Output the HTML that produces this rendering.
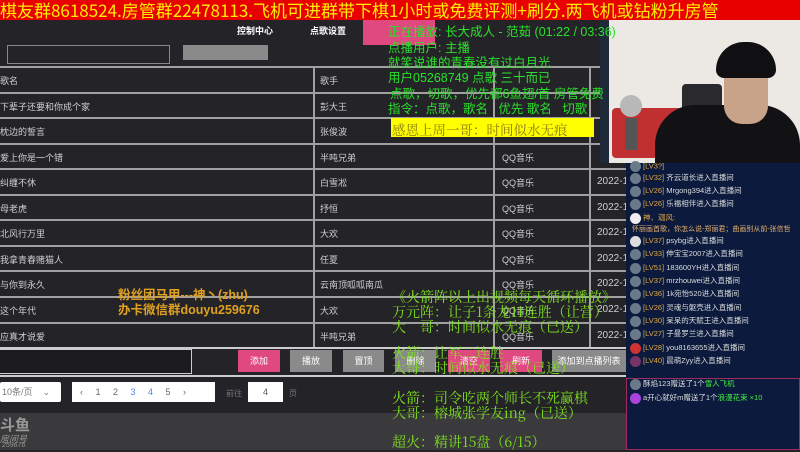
<!DOCTYPE html><html><head><meta charset="utf-8"><style>
*{margin:0;padding:0;box-sizing:border-box}
body{width:800px;height:450px;overflow:hidden;background:#242428;font-family:"Liberation Sans","Noto Sans CJK SC",sans-serif;position:relative;color:#ccc}
.a{position:absolute;white-space:nowrap}
.hl{position:absolute;left:0;width:626px;height:2px;background:#a0a0a0}
.vl{position:absolute;width:2px;background:#a0a0a0}
.c{position:absolute;font-size:9px;color:#d0d0d0;white-space:nowrap}
.g{position:absolute;color:#2be02b;font-size:12.5px;white-space:nowrap}
.gb{position:absolute;color:#7ee01e;font-size:14px;font-family:"Noto Serif CJK SC",serif;white-space:nowrap;left:392px}
.btn{position:absolute;top:350px;height:22px;font-size:9px;color:#fff;text-align:center;line-height:22px}
.ch{position:absolute;left:630px;font-size:7.5px;color:#ddd;white-space:nowrap}
.ch b{color:#e6a840;font-weight:normal}
.av{display:inline-block;width:11px;height:11px;border-radius:50%;background:#6a7a8a;vertical-align:middle;margin-right:2px}
</style></head><body>
<div class="a" style="left:0;top:0;width:800px;height:20px;background:#e80000"></div>
<div class="a" style="left:0;top:0;font-size:17px;line-height:20px;color:#ffee00;font-family:'Noto Sans CJK SC',sans-serif">棋友群8618524.房管群22478113.飞机可进群带下棋1小时或免费评测+刷分.两飞机或钻粉升房管</div>

<div class="a" style="left:237px;top:24px;font-size:9px;color:#fff;font-weight:bold">控制中心</div>
<div class="a" style="left:310px;top:24px;font-size:9px;color:#fff;font-weight:bold">点歌设置</div>
<div class="a" style="left:363px;top:20px;width:72px;height:25px;background:#e04880"></div>
<div class="a" style="left:7px;top:45px;width:163px;height:19px;border:1px solid #888"></div>
<div class="a" style="left:183px;top:45px;width:85px;height:15px;background:#8a8a8a"></div>

<div class="hl" style="top:66px"></div><div class="hl" style="top:92px"></div><div class="hl" style="top:117px"></div><div class="hl" style="top:143px"></div><div class="hl" style="top:168px"></div><div class="hl" style="top:194px"></div><div class="hl" style="top:219px"></div><div class="hl" style="top:245px"></div><div class="hl" style="top:270px"></div><div class="hl" style="top:296px"></div><div class="hl" style="top:322px"></div><div class="hl" style="top:347px;background:#ccc"></div>
<div class="vl" style="left:313px;top:66px;height:281px"></div>
<div class="vl" style="left:493px;top:66px;height:281px"></div>
<div class="vl" style="left:589px;top:66px;height:281px"></div>

<div class="c" style="left:0;top:74px">歌名</div><div class="c" style="left:320px;top:74px">歌手</div>
<div class="c" style="left:0;top:100px">下辈子还要和你成个家</div><div class="c" style="left:320px;top:100px">彭大王</div>
<div class="c" style="left:0;top:125px">枕边的誓言</div><div class="c" style="left:320px;top:125px">张俊波</div>
<div class="c" style="left:0;top:151px">爱上你是一个错</div><div class="c" style="left:320px;top:151px">半吨兄弟</div><div class="c" style="left:502px;top:151px">QQ音乐</div>
<div class="c" style="left:0;top:176px">纠缠不休</div><div class="c" style="left:320px;top:176px">白雪凇</div><div class="c" style="left:502px;top:176px">QQ音乐</div><div class="c" style="left:597px;top:176px;font-size:10px">2022-1</div>
<div class="c" style="left:0;top:202px">母老虎</div><div class="c" style="left:320px;top:202px">抒恒</div><div class="c" style="left:502px;top:202px">QQ音乐</div><div class="c" style="left:597px;top:202px;font-size:10px">2022-1</div>
<div class="c" style="left:0;top:227px">北风行万里</div><div class="c" style="left:320px;top:227px">大欢</div><div class="c" style="left:502px;top:227px">QQ音乐</div><div class="c" style="left:597px;top:227px;font-size:10px">2022-1</div>
<div class="c" style="left:0;top:253px">我拿青春赌猫人</div><div class="c" style="left:320px;top:253px">任夏</div><div class="c" style="left:502px;top:253px">QQ音乐</div><div class="c" style="left:597px;top:253px;font-size:10px">2022-1</div>
<div class="c" style="left:0;top:278px">与你到永久</div><div class="c" style="left:320px;top:278px">云南顶呱呱南瓜</div><div class="c" style="left:502px;top:278px">QQ音乐</div><div class="c" style="left:597px;top:278px;font-size:10px">2022-1</div>
<div class="c" style="left:0;top:304px">这个年代</div><div class="c" style="left:320px;top:304px">大欢</div><div class="c" style="left:502px;top:304px">QQ音乐</div><div class="c" style="left:597px;top:304px;font-size:10px">2022-1</div>
<div class="c" style="left:0;top:330px">应真才说爱</div><div class="c" style="left:320px;top:330px">半吨兄弟</div><div class="c" style="left:502px;top:330px">QQ音乐</div><div class="c" style="left:597px;top:330px;font-size:10px">2022-1</div>

<div class="a" style="left:0;top:349px;width:192px;height:25px;border:1px solid #ccc;border-left:none;background:#1c1c1f"></div>
<div class="btn" style="left:238px;width:42px;background:#e04880">添加</div>
<div class="btn" style="left:290px;width:42px;background:#8a8a8a">播放</div>
<div class="btn" style="left:343px;width:41px;background:#8a8a8a">置顶</div>
<div class="btn" style="left:395px;width:41px;background:#8a8a8a">删除</div>
<div class="btn" style="left:448px;width:42px;background:#e04880">清空</div>
<div class="btn" style="left:500px;width:42px;background:#e04880">刷新</div>
<div class="btn" style="left:552px;width:74px;background:#8a8a8a">添加到点播列表</div>
<div class="a" style="left:0;top:375px;width:626px;height:2px;background:#ccc"></div>

<div class="a" style="left:0;top:382px;width:61px;height:20px;background:#fff;border-radius:2px;font-size:9px;color:#777;line-height:20px;padding-left:2px">10条/页 &nbsp;&nbsp;&nbsp;⌄</div>
<div class="a" style="left:72px;top:382px;width:143px;height:20px;background:#fff;font-size:9px;color:#666;line-height:20px;word-spacing:10px;padding-left:8px">‹ 1 2 <span style="color:#4a8ae0">3 4</span> 5 ›</div>
<div class="a" style="left:226px;top:388px;font-size:8px;color:#777">前往</div>
<div class="a" style="left:248px;top:382px;width:35px;height:20px;background:#fff;font-size:9px;color:#555;text-align:center;line-height:20px">4</div>
<div class="a" style="left:289px;top:388px;font-size:8px;color:#777">页</div>

<div class="a" style="left:0;top:413px;width:626px;height:37px;background:#3a3a3c"></div>
<div class="a" style="left:0;top:414px;font-size:15px;font-weight:bold;color:#9a9a9a">斗鱼</div>
<div class="a" style="left:0;top:432px;font-size:9px;font-style:italic;color:#9a9a9a">房间号</div>
<div class="a" style="left:2px;top:442px;font-size:7px;font-style:italic;color:#9a9a9a">259676</div>

<div class="a" style="left:600px;top:20px;width:200px;height:143px;background:#ece8e4"></div>
<div class="a" style="left:600px;top:20px;width:9px;height:143px;background:#1e2a3a"></div>
<div class="a" style="left:682px;top:84px;width:40px;height:60px;background:#2a2a2e;border-radius:4px"></div>
<div class="a" style="left:612px;top:108px;width:70px;height:50px;background:#c03030;border-radius:4px"></div>
<div class="a" style="left:620px;top:95px;width:22px;height:22px;border-radius:50%;background:#b8b8b8"></div>
<div class="a" style="left:625px;top:118px;width:12px;height:32px;background:#555"></div>
<div class="a" style="left:655px;top:105px;width:145px;height:58px;background:#121214;border-radius:40px 40px 0 0"></div>
<div class="a" style="left:724px;top:68px;width:44px;height:56px;background:#c9a28a;border-radius:10px 10px 18px 18px"></div>
<div class="a" style="left:716px;top:42px;width:60px;height:36px;background:#101012;border-radius:28px 28px 8px 8px"></div>

<div class="a" style="left:626px;top:163px;width:174px;height:287px;background:#0b1a3d"></div>
<div class="a" style="left:626px;top:378px;width:174px;height:72px;border:1px solid #a02a60"></div>
<div class="ch" style="top:161px"><span class="av"></span><b>[LV3?]</b></div>
<div class="ch" style="top:172px"><span class="av"></span><b>[LV32]</b> 齐云道长进入直播间</div>
<div class="ch" style="top:185px"><span class="av"></span><b>[LV26]</b> Mrgong394进入直播间</div>
<div class="ch" style="top:198px"><span class="av"></span><b>[LV26]</b> 乐福相伴进入直播间</div>
<div class="ch" style="top:212px"><span class="av" style="background:#eee"></span><b>神、迦风:</b></div>
<div class="ch" style="top:224px;left:632px;color:#e6b070;font-size:7px">怀丽画首歌，你怎么说-郑丽君；曲画别从前-张信哲</div>
<div class="ch" style="top:235px"><span class="av" style="background:#ddd"></span><b>[LV37]</b> psybg进入直播间</div>
<div class="ch" style="top:248px"><span class="av"></span><b>[LV33]</b> 伸宝宝2007进入直播间</div>
<div class="ch" style="top:262px"><span class="av"></span><b>[LV51]</b> 183600YH进入直播间</div>
<div class="ch" style="top:275px"><span class="av"></span><b>[LV37]</b> mrzhouwei进入直播间</div>
<div class="ch" style="top:288px"><span class="av"></span><b>[LV36]</b> 1k宛怡520进入直播间</div>
<div class="ch" style="top:302px"><span class="av"></span><b>[LV26]</b> 灵魂与躯壳进入直播间</div>
<div class="ch" style="top:315px"><span class="av"></span><b>[LV30]</b> 呆呆的天赋王进入直播间</div>
<div class="ch" style="top:328px"><span class="av"></span><b>[LV27]</b> 子曼罗兰进入直播间</div>
<div class="ch" style="top:342px"><span class="av" style="background:#c33"></span><b>[LV28]</b> you8163655进入直播间</div>
<div class="ch" style="top:355px"><span class="av" style="background:#736"></span><b>[LV40]</b> 晨萌Zyy进入直播间</div>
<div class="ch" style="top:378px"><span class="av"></span>酥焰123赠送了1个<span style="color:#4e4">雪人飞机</span></div>
<div class="ch" style="top:392px"><span class="av" style="background:#a4d"></span>a开心就好m赠送了1个<span style="color:#4e4">浪漫花束 ×10</span></div>

<div class="g" style="left:388px;top:21px">正在播放: 长大成人 - 范茹 (01:22 / 03:36)</div>
<div class="g" style="left:388px;top:37px">点播用户: 主播</div>
<div class="g" style="left:388px;top:52px">就笑说谁的青春没有过白月光</div>
<div class="g" style="left:388px;top:67px">用户05268749 点歌 三十而已</div>
<div class="g" style="left:390px;top:83px">点歌，切歌，优先都6鱼翅/首 房管免费</div>
<div class="g" style="left:388px;top:98px">指令：点歌，歌名 &nbsp;&nbsp;优先 歌名 &nbsp;&nbsp;切歌</div>
<div class="a" style="left:391px;top:118px;width:203px;height:19px;background:#ffff00"></div>
<div class="a" style="left:392px;top:119px;font-size:13.5px;color:#8a7a10;font-family:'Noto Serif CJK SC',serif">感恩上周一哥：时间似水无痕</div>

<div class="a" style="left:118px;top:284px;font-size:12.5px;color:#e0a020;font-weight:bold">粉丝团马甲---神丶(zhu)</div>
<div class="a" style="left:118px;top:299px;font-size:12.5px;color:#e0a020;font-weight:bold">办卡微信群douyu259676</div>

<div class="gb" style="top:287px">《火箭阵以上出视频每天循环播放》</div>
<div class="gb" style="top:302px">万元阵：让子1条龙11连胜（让营）</div>
<div class="gb" style="top:317px">大　哥：时间似水无痕（已送）</div>
<div class="gb" style="top:343px">火箭：让军二连胜</div>
<div class="gb" style="top:358px">大哥：时间似水无痕（已送）</div>
<div class="gb" style="top:388px">火箭：司令吃两个师长不死赢棋</div>
<div class="gb" style="top:403px">大哥：榕城张学友ing（已送）</div>
<div class="gb" style="top:432px">超火：精讲15盘（6/15）</div>
</body></html>
